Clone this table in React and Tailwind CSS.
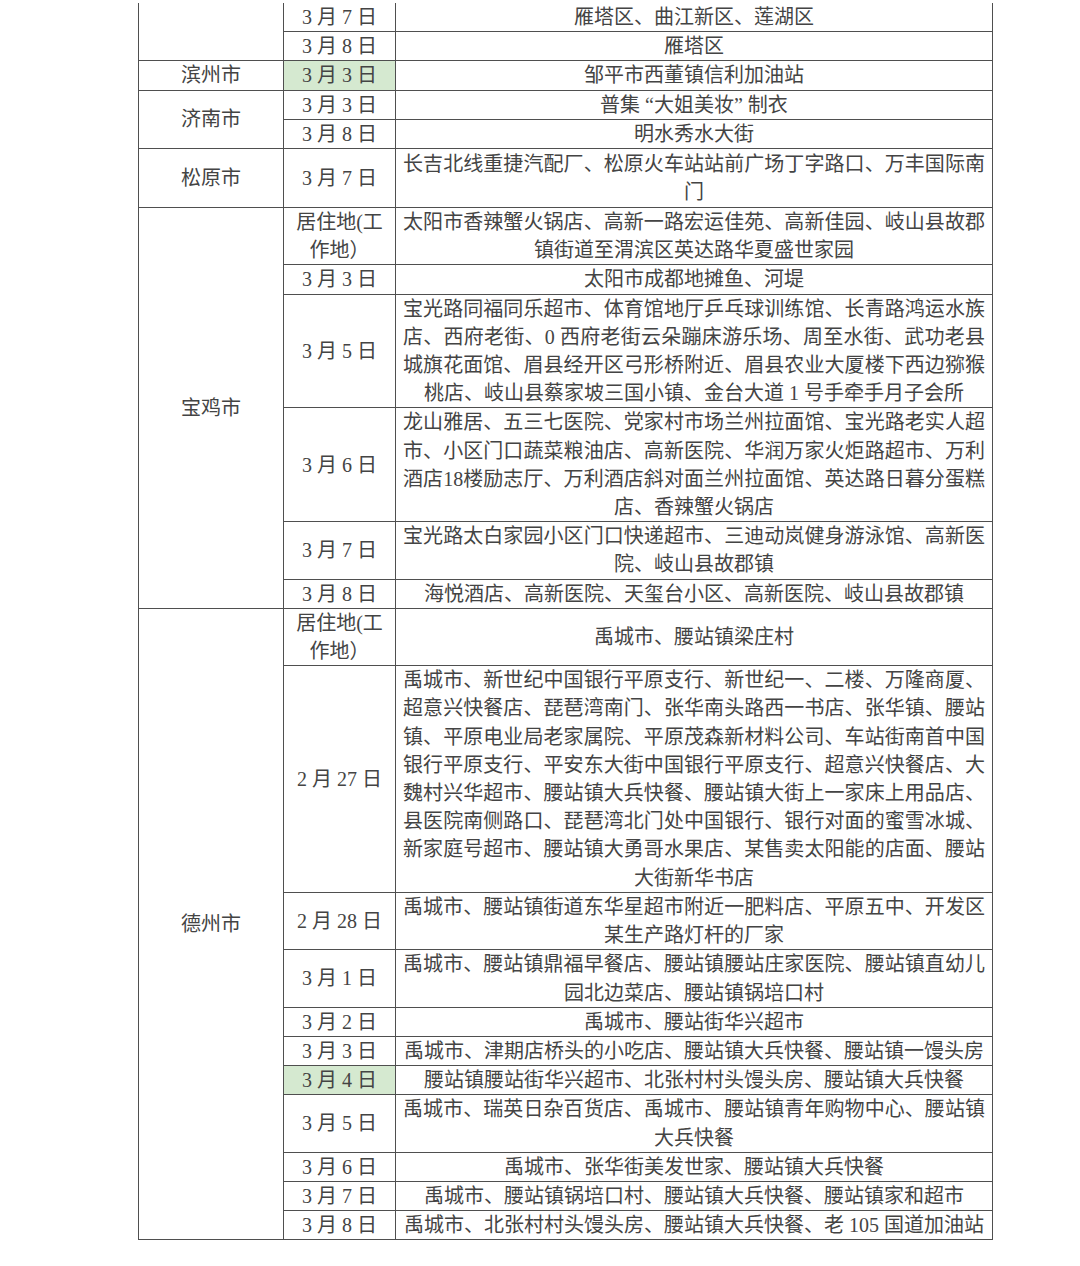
import React from "react";

const groups = [
  {
    city: "",
    top: true,
    rows: [
      { date: "3 月 7 日", loc: ["雁塔区、曲江新区、莲湖区"] },
      { date: "3 月 8 日", loc: ["雁塔区"] },
    ],
  },
  {
    city: "滨州市",
    rows: [{ date: "3 月 3 日", green: true, loc: ["邹平市西董镇信利加油站"] }],
  },
  {
    city: "济南市",
    rows: [
      { date: "3 月 3 日", loc: ["普集 “大姐美妆” 制衣"] },
      { date: "3 月 8 日", loc: ["明水秀水大街"] },
    ],
  },
  {
    city: "松原市",
    tall: true,
    rows: [
      {
        date: "3 月 7 日",
        loc: ["长吉北线重捷汽配厂、松原火车站站前广场丁字路口、万丰国际南", "门"],
      },
    ],
  },
  {
    city: "宝鸡市",
    rows: [
      {
        date: ["居住地(工", "作地）"],
        loc: [
          "太阳市香辣蟹火锅店、高新一路宏运佳苑、高新佳园、岐山县故郡",
          "镇街道至渭滨区英达路华夏盛世家园",
        ],
      },
      { date: "3 月 3 日", loc: ["太阳市成都地摊鱼、河堤"] },
      {
        date: "3 月 5 日",
        loc: [
          "宝光路同福同乐超市、体育馆地厅乒乓球训练馆、长青路鸿运水族",
          "店、西府老街、0 西府老街云朵蹦床游乐场、周至水街、武功老县",
          "城旗花面馆、眉县经开区弓形桥附近、眉县农业大厦楼下西边猕猴",
          "桃店、岐山县蔡家坡三国小镇、金台大道 1 号手牵手月子会所",
        ],
      },
      {
        date: "3 月 6 日",
        loc: [
          "龙山雅居、五三七医院、党家村市场兰州拉面馆、宝光路老实人超",
          "市、小区门口蔬菜粮油店、高新医院、华润万家火炬路超市、万利",
          "酒店18楼励志厅、万利酒店斜对面兰州拉面馆、英达路日暮分蛋糕",
          "店、香辣蟹火锅店",
        ],
      },
      {
        date: "3 月 7 日",
        loc: ["宝光路太白家园小区门口快递超市、三迪动岚健身游泳馆、高新医", "院、岐山县故郡镇"],
      },
      { date: "3 月 8 日", loc: ["海悦酒店、高新医院、天玺台小区、高新医院、岐山县故郡镇"] },
    ],
  },
  {
    city: "德州市",
    rows: [
      { date: ["居住地(工", "作地）"], loc: ["禹城市、腰站镇梁庄村"] },
      {
        date: "2 月 27 日",
        loc: [
          "禹城市、新世纪中国银行平原支行、新世纪一、二楼、万隆商厦、",
          "超意兴快餐店、琵琶湾南门、张华南头路西一书店、张华镇、腰站",
          "镇、平原电业局老家属院、平原茂森新材料公司、车站街南首中国",
          "银行平原支行、平安东大街中国银行平原支行、超意兴快餐店、大",
          "魏村兴华超市、腰站镇大兵快餐、腰站镇大街上一家床上用品店、",
          "县医院南侧路口、琵琶湾北门处中国银行、银行对面的蜜雪冰城、",
          "新家庭号超市、腰站镇大勇哥水果店、某售卖太阳能的店面、腰站",
          "大街新华书店",
        ],
      },
      {
        date: "2 月 28 日",
        loc: ["禹城市、腰站镇街道东华星超市附近一肥料店、平原五中、开发区", "某生产路灯杆的厂家"],
      },
      {
        date: "3 月 1 日",
        loc: ["禹城市、腰站镇鼎福早餐店、腰站镇腰站庄家医院、腰站镇直幼儿", "园北边菜店、腰站镇锅培口村"],
      },
      { date: "3 月 2 日", loc: ["禹城市、腰站街华兴超市"] },
      { date: "3 月 3 日", loc: ["禹城市、津期店桥头的小吃店、腰站镇大兵快餐、腰站镇一馒头房"] },
      { date: "3 月 4 日", green: true, loc: ["腰站镇腰站街华兴超市、北张村村头馒头房、腰站镇大兵快餐"] },
      {
        date: "3 月 5 日",
        loc: ["禹城市、瑞英日杂百货店、禹城市、腰站镇青年购物中心、腰站镇", "大兵快餐"],
      },
      { date: "3 月 6 日", loc: ["禹城市、张华街美发世家、腰站镇大兵快餐"] },
      { date: "3 月 7 日", loc: ["禹城市、腰站镇锅培口村、腰站镇大兵快餐、腰站镇家和超市"] },
      { date: "3 月 8 日", loc: ["禹城市、北张村村头馒头房、腰站镇大兵快餐、老 105 国道加油站"] },
    ],
  },
];

const cell = "border border-[#4f4f4f] align-middle p-0";

const Lines = ({ lines }) =>
  lines.map((line, i) =>
    i < lines.length - 1 ? (
      <div key={i} className="whitespace-nowrap text-justify [text-align-last:justify]">
        {line}
      </div>
    ) : (
      <div key={i} className="whitespace-nowrap text-center">
        {line}
      </div>
    )
  );

export default function App() {
  return (
    <div className="min-h-screen bg-white pt-[3px]">
      <table className="ml-[138px] w-[855px] table-fixed border-collapse font-['Liberation_Serif','Noto_Sans_CJK_SC',serif] text-[20px] leading-[28.2px] text-[#444444]">
        <colgroup>
          <col className="w-[145px]" />
          <col className="w-[112px]" />
          <col />
        </colgroup>
        <tbody>
          {groups.map((g, gi) =>
            g.rows.map((r, ri) => {
              const first = g.top && ri === 0;
              return (
                <tr key={gi + "-" + ri} className={g.tall ? "h-[59px]" : ""}>
                  {ri === 0 && (
                    <td
                      rowSpan={g.rows.length}
                      className={cell + " text-center" + (g.top ? " border-t-0" : "")}
                    >
                      {g.city}
                    </td>
                  )}
                  <td
                    className={
                      cell +
                      " text-center whitespace-nowrap" +
                      (r.green ? " bg-[#d5e9d0]" : "") +
                      (first ? " border-t-0" : "")
                    }
                  >
                    {Array.isArray(r.date) ? (
                      <>
                        {r.date[0]}
                        <br />
                        {r.date[1]}
                      </>
                    ) : (
                      r.date
                    )}
                  </td>
                  <td className={cell + " px-[7px]" + (first ? " border-t-0" : "")}>
                    <Lines lines={r.loc} />
                  </td>
                </tr>
              );
            })
          )}
        </tbody>
      </table>
    </div>
  );
}
